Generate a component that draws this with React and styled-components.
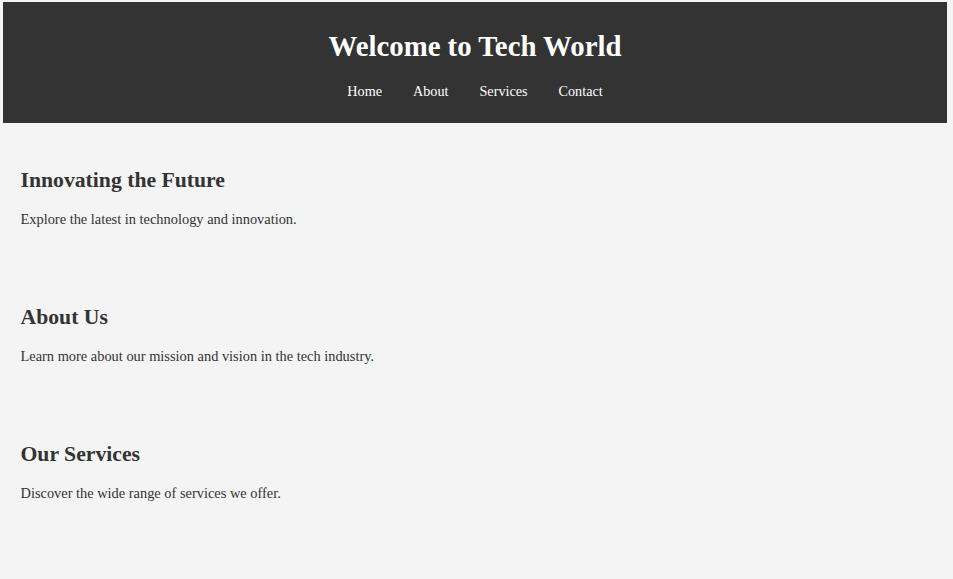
import React from "react";
import styled, { createGlobalStyle } from "styled-components";

const GlobalStyle = createGlobalStyle`
  html, body {
    margin: 0;
    padding: 0;
    background: #f4f4f4;
  }
  body {
    font-family: "Liberation Serif", "Times New Roman", serif;
    color: #333;
  }
`;

const Page = styled.div`
  padding: 2px 6px 0 3px;
`;

const Header = styled.header`
  background: #333;
  color: #fff;
  text-align: center;
  padding: 28px 0 23.5px;
  display: flex;
  flex-direction: column;
  align-items: center;
  gap: 19.5px;
`;

const Title = styled.h1`
  margin: 0;
  font-size: 28.8px;
  line-height: 33px;
  font-weight: bold;
`;

const Nav = styled.nav`
  display: flex;
  gap: 31px;
`;

const NavLink = styled.a`
  color: #fff;
  text-decoration: none;
  font-size: 14.2px;
  line-height: 17px;
`;

const Main = styled.main`
  padding-top: 7px;
`;

const Section = styled.section`
  padding: 17.5px;
  margin-bottom: 8px;
`;

const Heading = styled.h2`
  font-size: 21.7px;
  line-height: 25px;
  margin: 20px 0 18px;
`;

const Text = styled.p`
  font-size: 14.4px;
  line-height: 17px;
  margin: 0 0 14px;
`;

const sections = [
  { title: "Innovating the Future", text: "Explore the latest in technology and innovation." },
  { title: "About Us", text: "Learn more about our mission and vision in the tech industry." },
  { title: "Our Services", text: "Discover the wide range of services we offer." },
];

export default function App() {
  return (
    <Page>
      <GlobalStyle />
      <Header>
        <Title>Welcome to Tech World</Title>
        <Nav>
          <NavLink href="#">Home</NavLink>
          <NavLink href="#">About</NavLink>
          <NavLink href="#">Services</NavLink>
          <NavLink href="#">Contact</NavLink>
        </Nav>
      </Header>
      <Main>
        {sections.map((s) => (
          <Section key={s.title}>
            <Heading>{s.title}</Heading>
            <Text>{s.text}</Text>
          </Section>
        ))}
      </Main>
    </Page>
  );
}
